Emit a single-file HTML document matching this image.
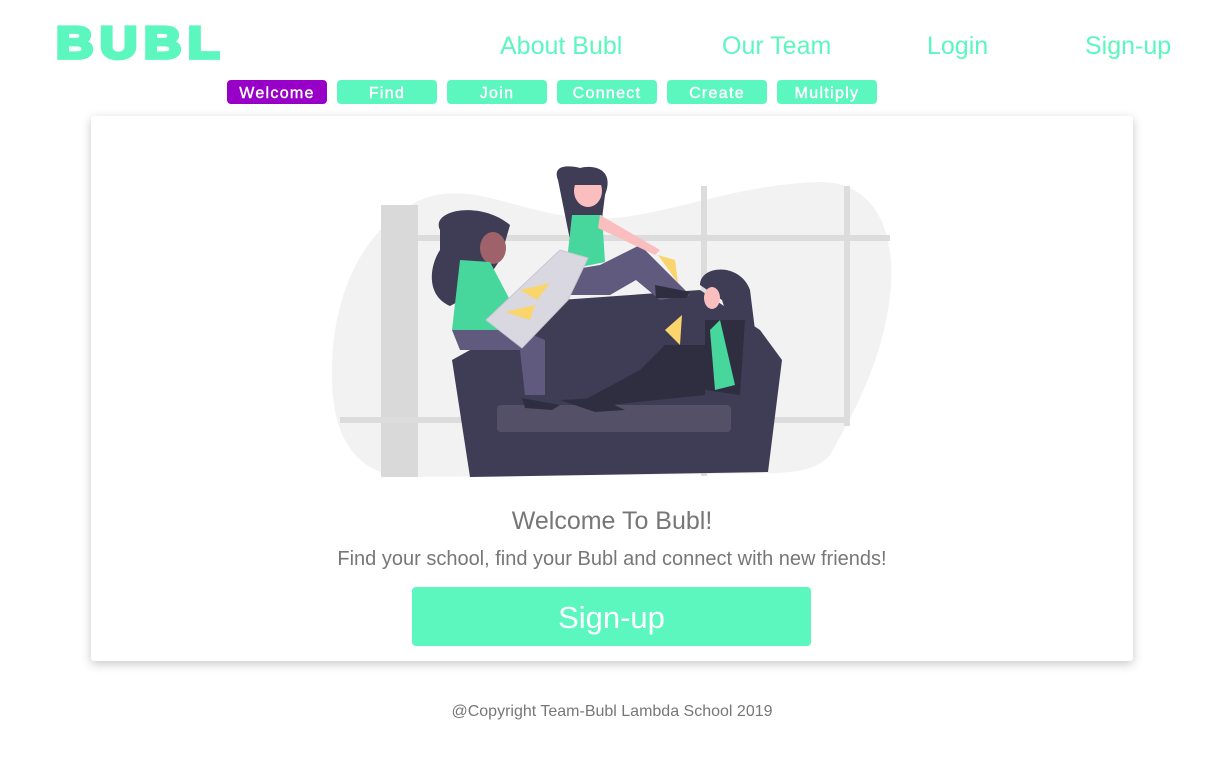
<!DOCTYPE html>
<html><head><meta charset="utf-8"><style>
*{margin:0;padding:0;box-sizing:border-box}
body{width:1219px;height:758px;background:#fff;position:relative;overflow:hidden;font-family:"Liberation Sans",sans-serif}
.a{position:absolute;white-space:nowrap}
.nav{color:#5cf7bf;font-size:25px;top:32px}
.tab{position:absolute;top:80px;width:100px;height:24px;border-radius:4px;background:#5cf7bf;color:#fff;font-size:16px;letter-spacing:1.3px;text-align:center;line-height:28px;-webkit-text-stroke:0.4px #fff}
.card{position:absolute;left:91px;top:116px;width:1042px;height:545px;background:#fff;box-shadow:0 3px 10px rgba(0,0,0,.22);border-radius:3px}
</style></head><body>
<div class="a" style="left:56px;top:18px;font-size:48px;font-weight:900;color:#5cf7bf;letter-spacing:6px;-webkit-text-stroke:4px #5cf7bf;transform-origin:0 0;transform:scale(1.08,0.93)">BUBL</div>
<div class="a nav" style="left:500px">About Bubl</div>
<div class="a nav" style="left:722px">Our Team</div>
<div class="a nav" style="left:927px">Login</div>
<div class="a nav" style="left:1085px">Sign-up</div>
<div class="tab" style="left:227px;background:#9900c7;-webkit-text-stroke:0.4px #fff">Welcome</div>
<div class="tab" style="left:337px">Find</div>
<div class="tab" style="left:447px">Join</div>
<div class="tab" style="left:557px">Connect</div>
<div class="tab" style="left:667px">Create</div>
<div class="tab" style="left:777px">Multiply</div>
<div class="card"></div>
<svg class="a" style="left:0;top:0" width="1219" height="758" viewBox="0 0 1219 758">
<path d="M332 380C330 300 360 230 420 200C470 180 510 210 580 218C650 225 720 185 820 182C880 182 900 240 888 310C878 370 850 420 830 455C810 478 770 472 720 474L400 477C350 470 333 430 332 380Z" fill="#f2f2f2"/>
<rect x="381" y="205" width="37" height="272" fill="#d9d9d9"/>
<rect x="418" y="235" width="472" height="6" fill="#dcdcdc"/>
<rect x="340" y="417" width="510" height="6" fill="#dcdcdc"/>
<rect x="701" y="186" width="6" height="290" fill="#dcdcdc"/>
<rect x="844" y="186" width="6" height="240" fill="#dcdcdc"/>
<path d="M452 360L560 300L700 290L760 330L782 360L768 472L470 477Z" fill="#3f3d56"/>
<rect x="497" y="405" width="234" height="27" rx="4" fill="#535068"/>
<path d="M558 180C552 165 568 165 580 168C595 164 615 170 605 195L600 235L570 240Z" fill="#3f3d56"/>
<path d="M572 215L602 215L605 262L566 270Z" fill="#47d69b"/>
<path d="M575 185a14 16 0 1 0 26 0z" fill="#fbbebe"/>
<path d="M570 270L600 265L640 245L690 295L660 300L636 280L610 295L570 295Z" fill="#5f5a7e"/>
<path d="M600 215L660 250L655 255L598 228Z" fill="#fbbebe"/>
<path d="M440 230C430 210 480 200 510 225L500 260L480 290L450 306C425 295 430 265 440 250Z" fill="#3f3d56"/>
<ellipse cx="493" cy="248" rx="13" ry="16" fill="#9f616a"/>
<path d="M460 260L490 262L510 300L500 330L452 330Z" fill="#47d69b"/>
<path d="M452 330L520 330L545 340L545 395L525 395L520 350L460 350Z" fill="#5f5a7e"/>
<path d="M486 320L560 250L588 258L568 300L522 348Z" fill="#d9d8e0" stroke="#c8c7d0"/>
<path d="M700 285C700 265 740 262 750 290L755 330L735 340L722 300Z" fill="#3f3d56"/>
<ellipse cx="712" cy="298" rx="8" ry="11" fill="#fbbebe"/>
<path d="M705 320L745 320L740 395L705 390Z" fill="#2f2e41"/>
<path d="M710 330L720 320L735 385L715 390Z" fill="#47d69b"/>
<path d="M665 345L705 345L705 395L610 405L575 405L640 370Z" fill="#2f2e41"/>
<path d="M665 330L682 315L680 345Z" fill="#f9d56b"/>
<path d="M520 290L550 283L537 300Z M505 312L535 305L530 320Z" fill="#f9d56b"/>
<path d="M658 255L675 260L678 283Z" fill="#f9d56b"/>
<path d="M655 285L690 292L686 298L656 298Z M522 398L560 405L552 410L525 408Z M560 400L600 398L625 410L595 412Z" fill="#2f2e41"/>
</svg>
<div class="a" style="left:0;width:1224px;text-align:center;top:507px;font-size:25px;color:#777">Welcome To Bubl!</div>
<div class="a" style="left:0;width:1224px;text-align:center;top:548px;font-size:20px;color:#777">Find your school, find your Bubl and connect with new friends!</div>
<div class="a" style="left:412px;top:587px;width:399px;height:59px;background:#5cf7bf;border-radius:4px;color:#fff;font-size:31px;text-align:center;line-height:61px">Sign-up</div>
<div class="a" style="left:0;width:1224px;text-align:center;top:703px;font-size:16px;color:#777">@Copyright Team-Bubl Lambda School 2019</div>
</body></html>
